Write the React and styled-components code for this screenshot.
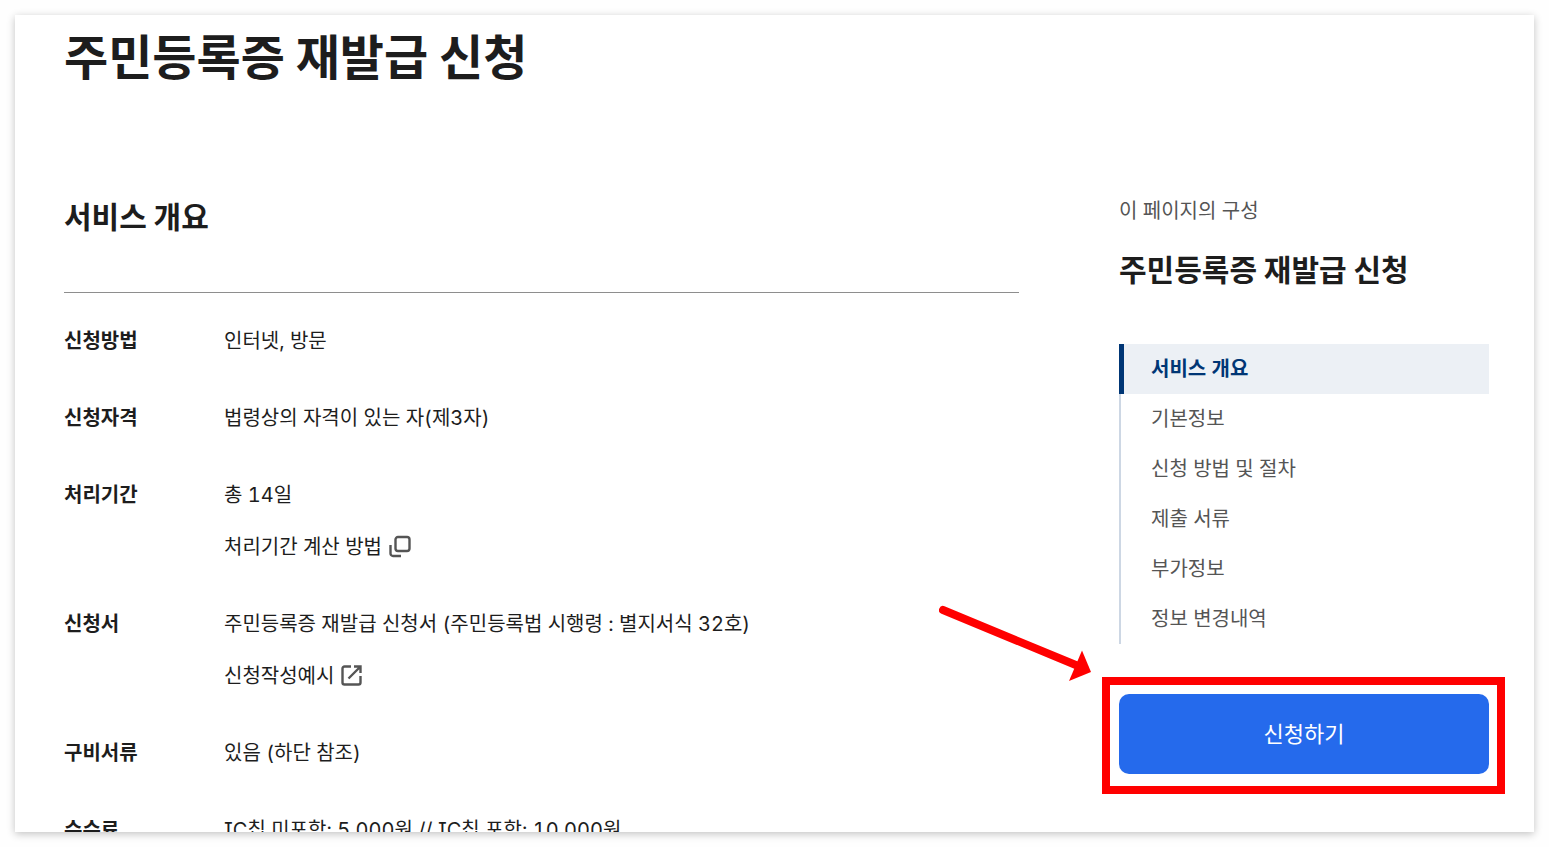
import React from 'react';
import styled, { createGlobalStyle } from 'styled-components';

const GlobalStyle = createGlobalStyle`
  * {
    box-sizing: border-box;
  }
  body {
    margin: 0;
    background: #fefefe;
    color: #1d1d1d;
    font-family: Inter, 'Noto Sans CJK KR', sans-serif;
    font-feature-settings: 'tnum', 'cv08';
    font-size: 20px;
    line-height: 32px;
  }
`;

const overview = [
  { label: '신청방법', value: '인터넷, 방문' },
  { label: '신청자격', value: '법령상의 자격이 있는 자(제3자)' },
  { label: '처리기간', value: '총 14일', link: '처리기간 계산 방법', icon: 'copy' },
  {
    label: '신청서',
    value: '주민등록증 재발급 신청서 (주민등록법 시행령 : 별지서식 32호)',
    link: '신청작성예시',
    icon: 'external'
  },
  { label: '구비서류', value: '있음 (하단 참조)' },
  { label: '수수료', value: 'IC칩 미포함: 5,000원 // IC칩 포함: 10,000원' }
];

const sections = ['서비스 개요', '기본정보', '신청 방법 및 절차', '제출 서류', '부가정보', '정보 변경내역'];

const CopyIcon = () => (
  <Icon viewBox="0 0 24 24" aria-hidden="true">
    <rect x="7.500" y="2" width="14" height="14" rx="2.500" />
    <path d="M2.500 10v8.500a2.500 2.500 0 0 0 2.500 2.500H13" />
  </Icon>
);

const ExternalIcon = () => (
  <Icon viewBox="0 0 24 24" aria-hidden="true">
    <path d="M11 2.500H4.500A2 2 0 0 0 2.500 4.500v14a2 2 0 0 0 2 2h14a2 2 0 0 0 2-2V12" />
    <path d="M14 2.500h6.500v6.500M20 3L8.500 14.500" />
  </Icon>
);

const App = () => {
  return (
    <>
      <GlobalStyle />
      <Page>
        <Title>주민등록증 재발급 신청</Title>
        <Columns>
          <section>
            <SectionTitle>서비스 개요</SectionTitle>
            <InfoList>
              {overview.map(item => (
                <InfoRow key={item.label}>
                  <Label>{item.label}</Label>
                  <Value>
                    <span>{item.value}</span>
                    {item.link && (
                      <InfoLink href="#">
                        {item.link}
                        {item.icon === 'copy' ? <CopyIcon /> : <ExternalIcon />}
                      </InfoLink>
                    )}
                  </Value>
                </InfoRow>
              ))}
            </InfoList>
          </section>
          <aside>
            <Caption>이 페이지의 구성</Caption>
            <SideTitle>주민등록증 재발급 신청</SideTitle>
            <SideNav>
              {sections.map((name, i) => (
                <NavLink key={name} href="#" $active={i === 0}>{name}</NavLink>
              ))}
            </SideNav>
            <ApplyArea>
              <ApplyButton type="button">신청하기</ApplyButton>
              <Highlight />
              <Arrow viewBox="0 0 156 80" aria-hidden="true">
                <path d="M4 6L138 61.500" stroke="#f00" strokeWidth="8" strokeLinecap="round" />
                <path d="M143 46.500L152 68L130 77Z" fill="#f00" />
              </Arrow>
            </ApplyArea>
          </aside>
        </Columns>
      </Page>
    </>
  );
};

const Page = styled.main`
  height: calc(100vh - 30px);
  margin: 15px;
  padding: 7px 45px 0 49px;
  overflow: hidden;
  background: #fff;
  box-shadow: 0 2px 8px rgba(0, 0, 0, 0.24);
`;

const Title = styled.h1`
  margin: 0 0 109px;
  font-family: 'Noto Sans CJK KR', sans-serif;
  font-size: 48px;
  font-weight: 700;
  line-height: 64px;
`;

const Columns = styled.div`
  display: grid;
  grid-template-columns: minmax(0, 1fr) 370px;
  column-gap: 100px;
`;

const SectionTitle = styled.h2`
  margin: 0;
  padding-bottom: 57px;
  border-bottom: 1px solid #8e8e8e;
  font-family: 'Noto Sans CJK KR', sans-serif;
  font-size: 30px;
  font-weight: 700;
  line-height: 40px;
`;

const InfoList = styled.dl`
  display: flex;
  flex-direction: column;
  gap: 45px;
  margin: 0;
  padding-top: 32px;
`;

const InfoRow = styled.div`
  display: flex;
`;

const Label = styled.dt`
  width: 160px;
  flex: none;
  font-weight: 700;
`;

const Value = styled.dd`
  display: flex;
  flex-direction: column;
  align-items: flex-start;
  gap: 20px;
  margin: 0;
`;

const InfoLink = styled.a`
  display: inline-flex;
  align-items: center;
  gap: 6px;
  color: inherit;
  text-decoration: none;
`;

const Icon = styled.svg`
  width: 24px;
  height: 24px;
  fill: none;
  stroke: #555;
  stroke-width: 2.4;
`;

const Caption = styled.p`
  margin: 0;
  color: #555;
`;

const SideTitle = styled.h2`
  margin: 21px 0 56px;
  font-family: 'Noto Sans CJK KR', sans-serif;
  font-size: 30px;
  font-weight: 700;
  line-height: 40px;
`;

const SideNav = styled.nav`
  display: flex;
  flex-direction: column;
`;

const NavLink = styled.a`
  padding: 9px 0 9px ${props => (props.$active ? 27 : 30)}px;
  border-left: ${props => (props.$active ? '5px solid #003675' : '2px solid #cdd7e4')};
  background: ${props => (props.$active ? '#ecf0f5' : 'transparent')};
  color: ${props => (props.$active ? '#003675' : '#555')};
  font-weight: ${props => (props.$active ? 700 : 400)};
  text-decoration: none;
`;

const ApplyArea = styled.div`
  position: relative;
  margin-top: 50px;
`;

const ApplyButton = styled.button`
  display: block;
  width: 100%;
  height: 80px;
  padding: 0 0 5px;
  border: 0;
  border-radius: 10px;
  background: #256aec;
  color: #fff;
  font-family: inherit;
  font-size: 22px;
  cursor: pointer;
`;

const Highlight = styled.div`
  position: absolute;
  inset: -17px -16px -20px -17px;
  border: 8px solid #f00;
  pointer-events: none;
`;

const Arrow = styled.svg`
  position: absolute;
  top: -90px;
  left: -180px;
  width: 156px;
  height: 80px;
  fill: none;
`;

export default App;
